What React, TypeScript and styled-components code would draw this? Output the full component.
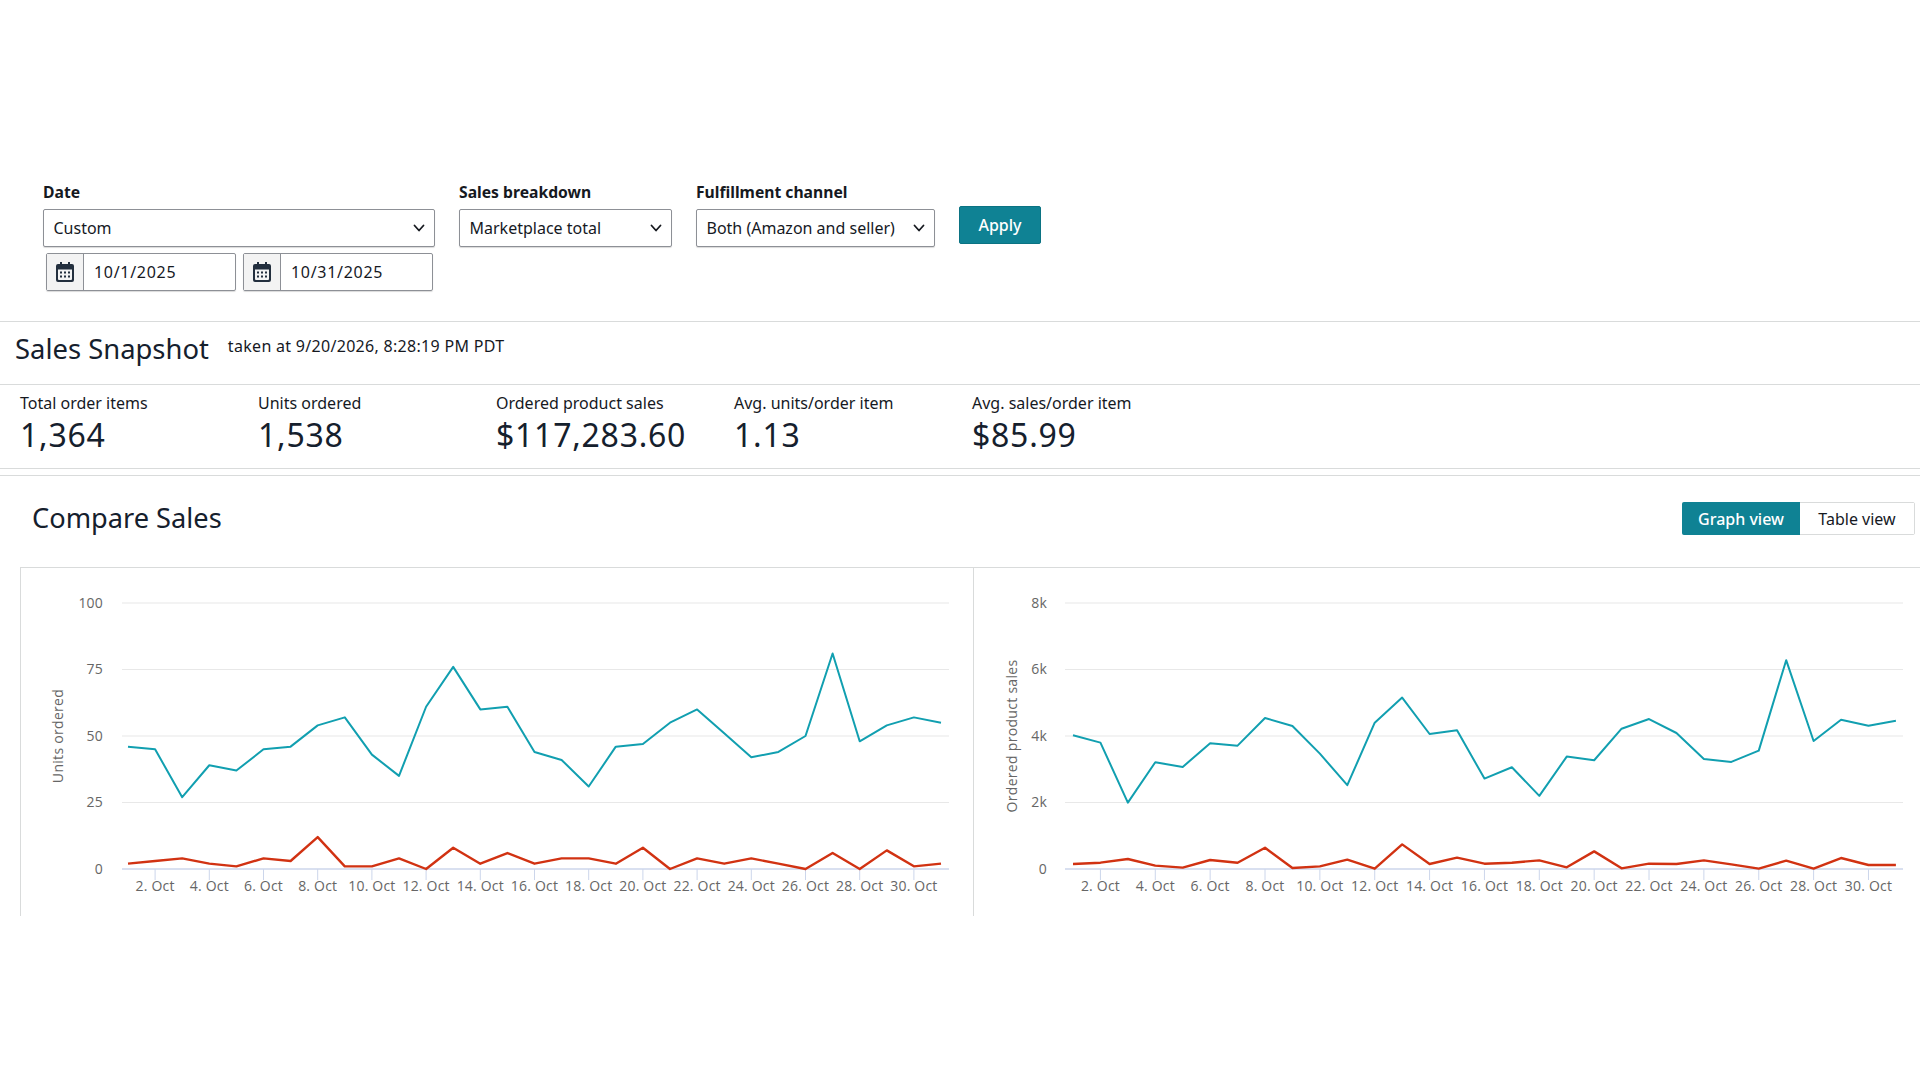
import { createGlobalStyle, styled } from "styled-components";

const GlobalStyle = createGlobalStyle`
  html, body {
    margin: 0;
    padding: 0;
    background: #fff;
    font-family: "Noto Sans", "Liberation Sans", sans-serif;
    color: #0f1111;
  }
  * { box-sizing: border-box; }
`;

const colors = {
  teal: "#0f8294",
  line: "#119fb0",
  red: "#d13212",
  border: "#8d9096",
  divider: "#d9dbdb",
  text: "#16191f",
  heading: "#15202d",
  axis: "#666666",
  grid: "#e8e8e8",
  tick: "#ccd6eb",
};

const unitsTeal = [46, 45, 27, 39, 37, 45, 46, 54, 57, 43, 35, 61, 76, 60, 61, 44, 41, 31, 46, 47, 55, 60, 51, 42, 44, 50, 81, 48, 54, 57, 55];
const unitsRed = [2, 3, 4, 2, 1, 4, 3, 12, 1, 1, 4, 0, 8, 2, 6, 2, 4, 4, 2, 8, 0, 4, 2, 4, 2, 0, 6, 0, 7, 1, 2];
const salesTeal = [4020, 3800, 1996, 3210, 3070, 3780, 3710, 4540, 4300, 3470, 2520, 4400, 5155, 4060, 4170, 2720, 3060, 2200, 3380, 3270, 4220, 4510, 4090, 3310, 3220, 3560, 6280, 3850, 4490, 4310, 4460];
const salesRed = [150, 190, 300, 100, 40, 270, 190, 640, 30, 80, 280, 10, 740, 150, 340, 160, 190, 260, 50, 530, 20, 160, 150, 260, 140, 10, 250, 10, 330, 120, 120];

const metrics = [
  { label: "Total order items", value: "1,364" },
  { label: "Units ordered", value: "1,538" },
  { label: "Ordered product sales", value: "$117,283.60" },
  { label: "Avg. units/order item", value: "1.13" },
  { label: "Avg. sales/order item", value: "$85.99" },
];

const Chevron = () => (
  <svg width="14" height="14" viewBox="0 0 14 14" fill="none">
    <path d="M2.5 4.5 7 9.5l4.5-5" stroke="#16191f" strokeWidth="1.8" strokeLinecap="round" strokeLinejoin="round" />
  </svg>
);

const CalendarIcon = () => (
  <svg width="18" height="20" viewBox="0 0 18 20">
    <path d="M4 0h2v3H4zM12 0h2v3h-2z" fill="#232f3e" />
    <path
      fillRule="evenodd"
      d="M2 2h14a2 2 0 0 1 2 2v14a2 2 0 0 1-2 2H2a2 2 0 0 1-2-2V4a2 2 0 0 1 2-2Zm0 5.5V17a1 1 0 0 0 1 1h12a1 1 0 0 0 1-1V7.5H2Z"
      fill="#232f3e"
    />
    <path d="M4 9.5h2v2H4zM8 9.5h2v2H8zM12 9.5h2v2h-2zM4 13.5h2v2H4zM8 13.5h2v2H8zM12 13.5h2v2h-2z" fill="#232f3e" />
  </svg>
);

type ChartProps = {
  title: string;
  yLabels: string[];
  max: number;
  teal: number[];
  red: number[];
  plotLeft: number;
  plotRight: number;
  firstX: number;
  step: number;
  titleX: number;
  labelX: number;
};

const BASE_Y = 301;
const TOP_Y = 35;

const SalesChart = ({ title, yLabels, max, teal, red, plotLeft, plotRight, firstX, step, titleX, labelX }: ChartProps) => {
  const yOf = (v: number) => BASE_Y - (v / max) * (BASE_Y - TOP_Y);
  const points = (data: number[]) => data.map((v, i) => `${firstX + i * step},${yOf(v)}`).join(" ");
  const days = Array.from({ length: 15 }, (_, i) => (i + 1) * 2);

  return (
    <ChartSvg viewBox="0 0 946 348">
      {yLabels.map((label, i) => {
        const y = yOf((max / (yLabels.length - 1)) * i);
        return (
          <g key={label}>
            {i > 0 && <line x1={plotLeft} x2={plotRight} y1={y} y2={y} stroke={colors.grid} strokeWidth="1.2" />}
            <AxisText x={labelX} y={y + 4.5} textAnchor="end">
              {label}
            </AxisText>
          </g>
        );
      })}
      <line x1={plotLeft} x2={plotRight} y1={BASE_Y} y2={BASE_Y} stroke={colors.tick} strokeWidth="1.4" />
      {days.map((day) => {
        const x = firstX + (day - 1) * step;
        return (
          <g key={day}>
            <line x1={x} x2={x} y1={BASE_Y} y2={BASE_Y + 11} stroke={colors.tick} strokeWidth="1" />
            <AxisText x={x} y={BASE_Y + 22} textAnchor="middle">
              {`${day}. Oct`}
            </AxisText>
          </g>
        );
      })}
      <AxisTitle x={titleX} y={168} textAnchor="middle" transform={`rotate(-90 ${titleX} 168)`}>
        {title}
      </AxisTitle>
      <polyline points={points(teal)} fill="none" stroke={colors.line} strokeWidth="2" strokeLinejoin="round" />
      <polyline points={points(red)} fill="none" stroke={colors.red} strokeWidth="2.4" strokeLinejoin="round" />
    </ChartSvg>
  );
};

export default function App() {
  return (
    <Page>
      <GlobalStyle />
      <FilterBar>
        <FilterGroup $width={392}>
          <FilterLabel>Date</FilterLabel>
          <Select>
            Custom
            <Chevron />
          </Select>
          <DateRow>
            <DateInput>
              <DateIcon>
                <CalendarIcon />
              </DateIcon>
              <DateValue>10/1/2025</DateValue>
            </DateInput>
            <DateInput>
              <DateIcon>
                <CalendarIcon />
              </DateIcon>
              <DateValue>10/31/2025</DateValue>
            </DateInput>
          </DateRow>
        </FilterGroup>
        <FilterGroup $width={213}>
          <FilterLabel>Sales breakdown</FilterLabel>
          <Select>
            Marketplace total
            <Chevron />
          </Select>
        </FilterGroup>
        <FilterGroup $width={239}>
          <FilterLabel>Fulfillment channel</FilterLabel>
          <Select>
            Both (Amazon and seller)
            <Chevron />
          </Select>
        </FilterGroup>
        <ApplyButton>Apply</ApplyButton>
      </FilterBar>

      <SnapshotHeader>
        <SnapshotTitle>Sales Snapshot</SnapshotTitle>
        <SnapshotTime>taken at 9/20/2026, 8:28:19 PM PDT</SnapshotTime>
      </SnapshotHeader>

      <MetricsRow>
        {metrics.map((metric) => (
          <Metric key={metric.label}>
            <MetricLabel>{metric.label}</MetricLabel>
            <MetricValue>{metric.value}</MetricValue>
          </Metric>
        ))}
      </MetricsRow>

      <CompareHeader>
        <CompareTitle>Compare Sales</CompareTitle>
        <ViewToggle>
          <ToggleButton $active>Graph view</ToggleButton>
          <ToggleButton>Table view</ToggleButton>
        </ViewToggle>
      </CompareHeader>

      <ChartsRow>
        <ChartPanel>
          <SalesChart
            title="Units ordered"
            yLabels={["0", "25", "50", "75", "100"]}
            max={100}
            teal={unitsTeal}
            red={unitsRed}
            plotLeft={101}
            plotRight={928}
            firstX={107}
            step={27.1}
            titleX={42}
            labelX={82}
          />
        </ChartPanel>
        <ChartPanel>
          <SalesChart
            title="Ordered product sales"
            yLabels={["0", "2k", "4k", "6k", "8k"]}
            max={8000}
            teal={salesTeal}
            red={salesRed}
            plotLeft={91}
            plotRight={929}
            firstX={99}
            step={27.43}
            titleX={43}
            labelX={73}
          />
        </ChartPanel>
      </ChartsRow>
    </Page>
  );
}

const Page = styled.div`
  width: 1920px;
  min-height: 1080px;
  padding-top: 180px;
`;

const FilterBar = styled.div`
  display: flex;
  align-items: flex-start;
  gap: 24px;
  height: 142px;
  padding-left: 43px;
  border-bottom: 1px solid ${colors.divider};
`;

const FilterGroup = styled.div<{ $width: number }>`
  width: ${(p) => p.$width}px;
  display: flex;
  flex-direction: column;
`;

const FilterLabel = styled.div`
  font-size: 15.7px;
  line-height: 24px;
  font-weight: 700;
  color: ${colors.text};
  margin-bottom: 5px;
`;

const Select = styled.div`
  height: 38px;
  display: flex;
  align-items: center;
  justify-content: space-between;
  padding: 0 8px 0 9.5px;
  font-size: 16px;
  color: ${colors.text};
  background: #fff;
  border: 1px solid ${colors.border};
  border-radius: 2px;
  box-shadow: 0 1px 1px rgba(0, 0, 0, 0.15);
`;

const DateRow = styled.div`
  display: flex;
  gap: 7px;
  margin: 6px 2px 0 3px;
`;

const DateInput = styled.div`
  flex: 1;
  height: 38px;
  display: flex;
  border: 1px solid ${colors.border};
  border-radius: 2px;
  box-shadow: 0 1px 1px rgba(0, 0, 0, 0.15);
`;

const DateIcon = styled.div`
  width: 37px;
  display: flex;
  align-items: center;
  justify-content: center;
  background: #f3f3f3;
  border-right: 1px solid ${colors.border};
`;

const DateValue = styled.div`
  padding-left: 10px;
  font-size: 16px;
  line-height: 36px;
  letter-spacing: 0.7px;
  color: ${colors.text};
`;

const ApplyButton = styled.button`
  width: 82px;
  height: 38px;
  margin-top: 26px;
  padding: 0;
  font-family: inherit;
  font-size: 16px;
  font-weight: 500;
  color: #fff;
  background: ${colors.teal};
  border: 1px solid #0b7383;
  border-radius: 2px;
`;

const SnapshotHeader = styled.div`
  height: 63px;
  display: flex;
  align-items: flex-start;
  padding-left: 15px;
  gap: 19px;
  border-bottom: 1px solid ${colors.divider};
`;

const SnapshotTitle = styled.h2`
  margin: 8px 0 0;
  font-size: 27.4px;
  line-height: 38px;
  font-weight: 400;
  color: ${colors.heading};
`;

const SnapshotTime = styled.div`
  margin-top: 13px;
  font-size: 16px;
  line-height: 22px;
  letter-spacing: 0.3px;
  color: ${colors.text};
`;

const MetricsRow = styled.div`
  height: 84px;
  display: grid;
  grid-template-columns: repeat(5, 238px);
  padding-left: 20px;
  border-bottom: 1px solid ${colors.divider};
`;

const Metric = styled.div`
  padding-top: 6px;
`;

const MetricLabel = styled.div`
  font-size: 16px;
  line-height: 24px;
  color: ${colors.text};
`;

const MetricValue = styled.div`
  font-size: 32px;
  line-height: 40px;
  letter-spacing: 0.75px;
  color: ${colors.heading};
`;

const CompareHeader = styled.div`
  height: 92px;
  margin-top: 6px;
  padding: 23px 5px 0 32px;
  display: flex;
  justify-content: space-between;
  align-items: flex-start;
  border-top: 1px solid ${colors.divider};
`;

const CompareTitle = styled.h2`
  margin: 0;
  font-size: 27.2px;
  line-height: 38px;
  font-weight: 400;
  color: ${colors.heading};
`;

const ViewToggle = styled.div`
  display: flex;
  height: 33px;
  margin-top: 3px;
  border: 1px solid ${colors.divider};
  border-radius: 2px;
`;

const ToggleButton = styled.div<{ $active?: boolean }>`
  width: ${(p) => (p.$active ? 118 : 114)}px;
  margin: ${(p) => (p.$active ? "-1px 0 -1px -1px" : "0")};
  display: flex;
  align-items: center;
  justify-content: center;
  font-size: 16px;
  font-weight: ${(p) => (p.$active ? 500 : 400)};
  color: ${(p) => (p.$active ? "#fff" : colors.text)};
  background: ${(p) => (p.$active ? colors.teal : "#fff")};
  border-radius: 2px 0 0 2px;
`;

const ChartsRow = styled.div`
  display: grid;
  grid-template-columns: 953px 946px;
  margin-left: 20px;
  border-top: 1px solid ${colors.divider};
`;

const ChartPanel = styled.div`
  height: 348px;
  border-left: 1px solid ${colors.divider};
`;

const ChartSvg = styled.svg`
  display: block;
  width: 946px;
  height: 348px;
`;

const AxisText = styled.text`
  font-family: "Open Sans", "Noto Sans", sans-serif;
  font-size: 14px;
  letter-spacing: 0.2px;
  fill: ${colors.axis};
`;

const AxisTitle = styled.text`
  font-family: "Open Sans", "Noto Sans", sans-serif;
  font-size: 14px;
  letter-spacing: 0.3px;
  fill: ${colors.axis};
`;
